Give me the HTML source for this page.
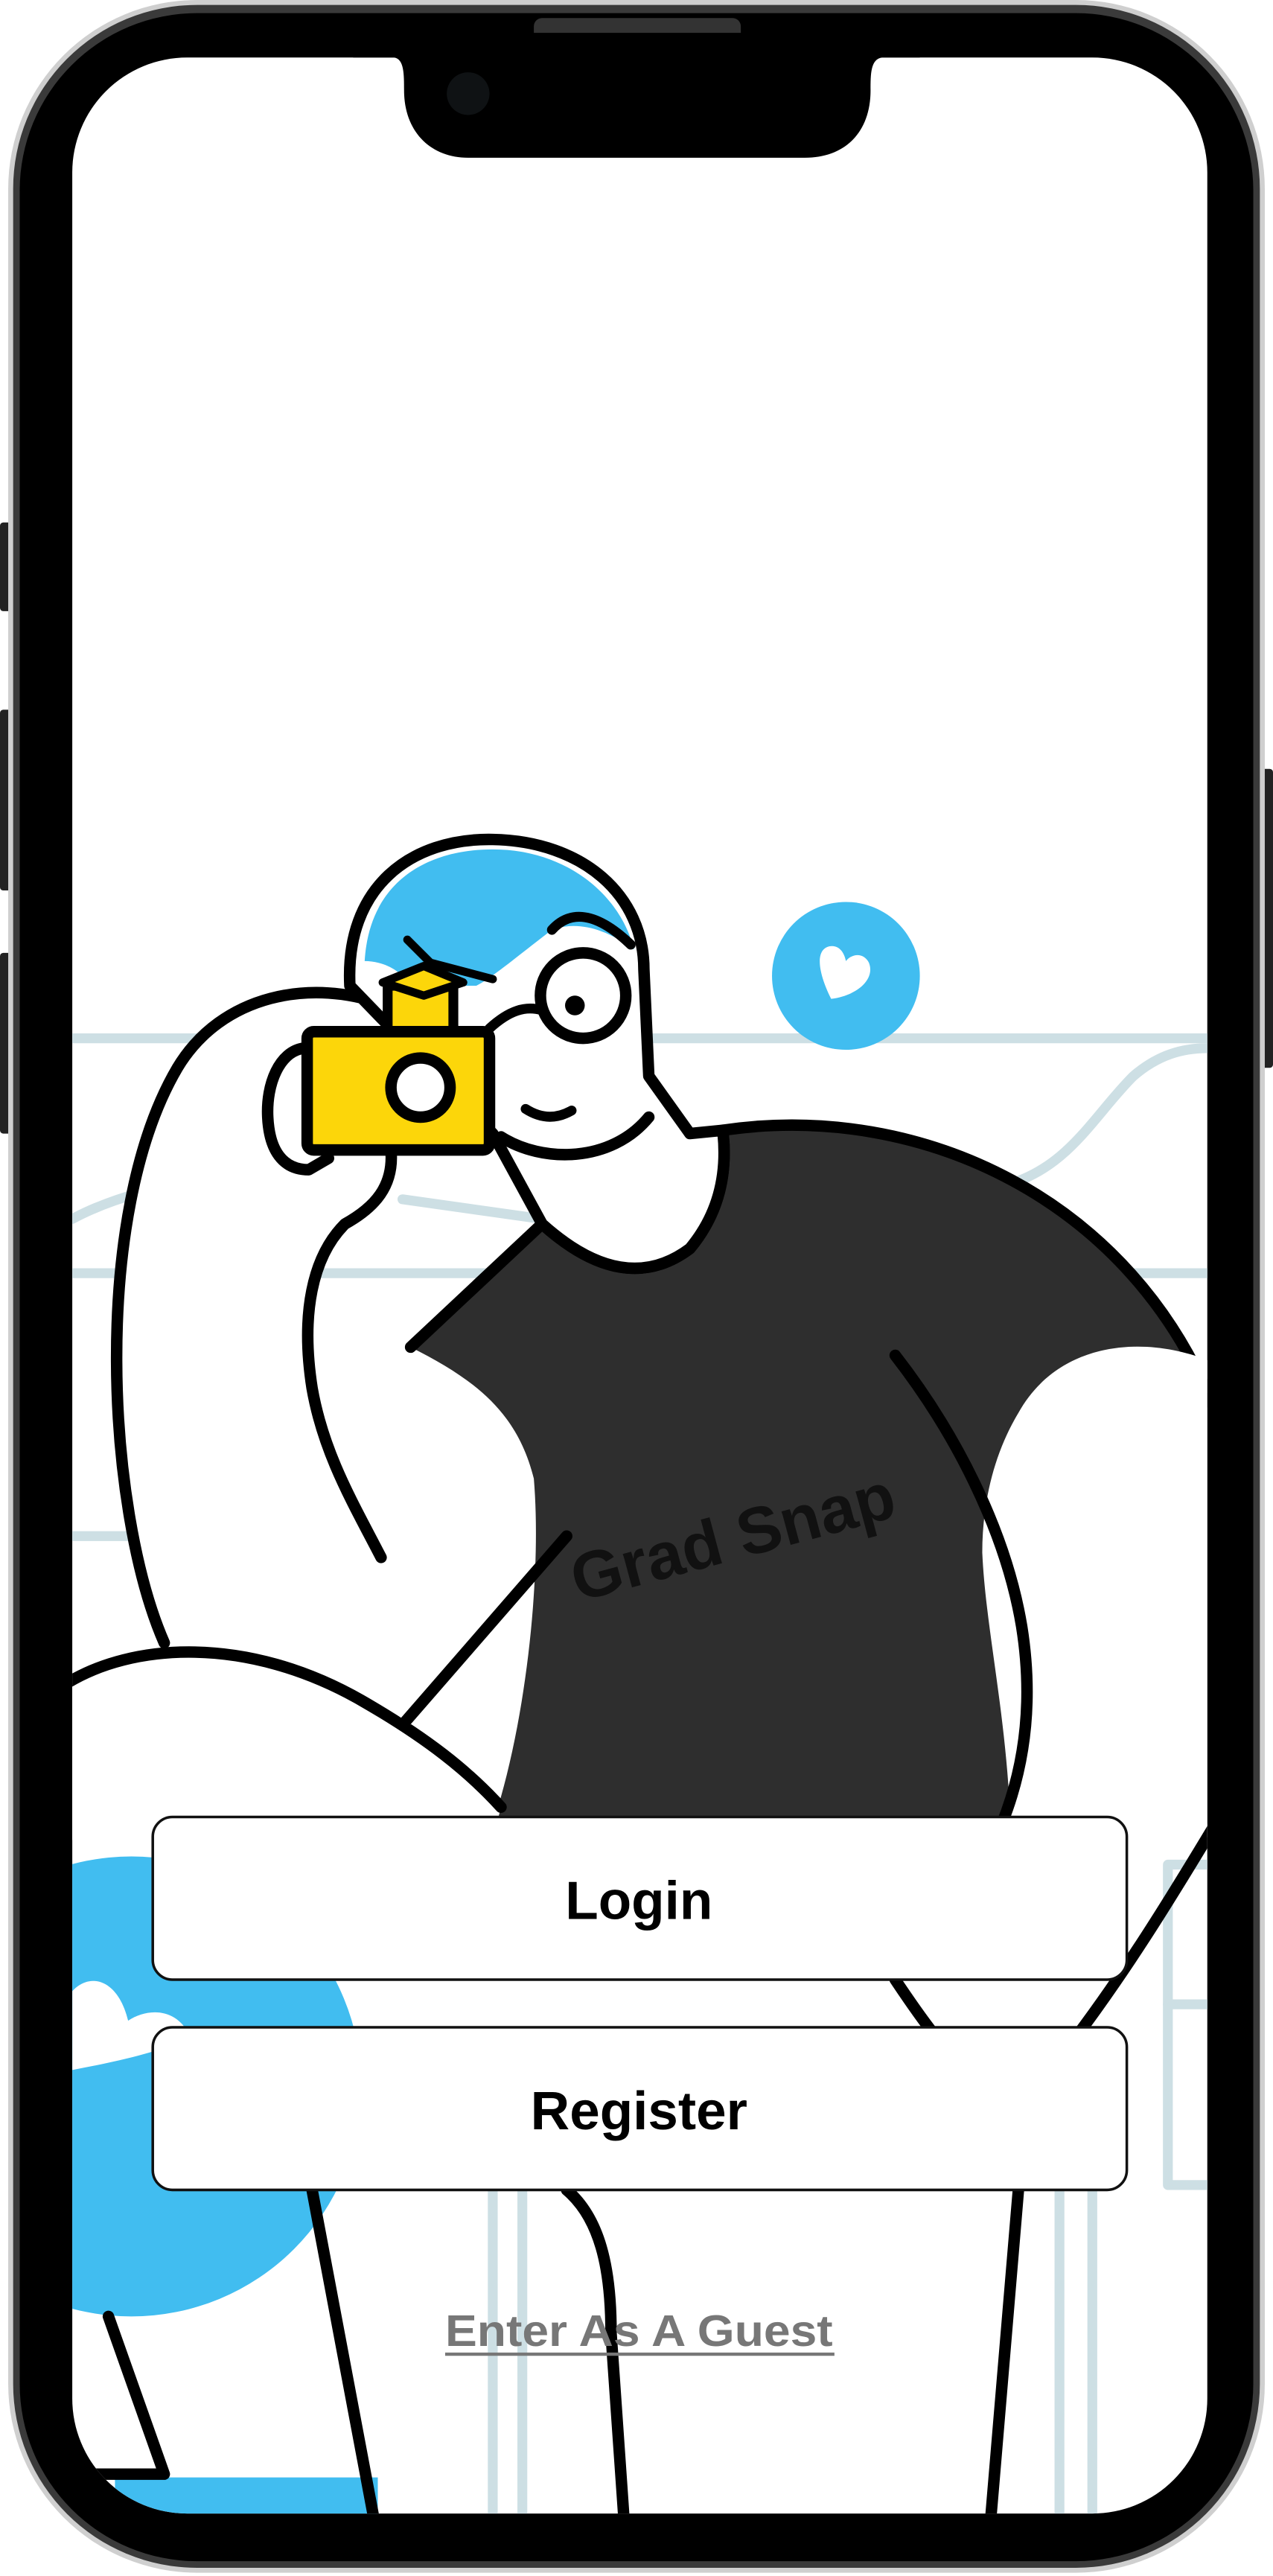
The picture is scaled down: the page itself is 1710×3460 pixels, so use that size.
<!DOCTYPE html>
<html><head><meta charset="utf-8"><style>
html,body{margin:0;padding:0;background:#fff;width:1710px;height:3460px;overflow:hidden}
svg{display:block}
</style></head><body>
<svg width="1710" height="3460" viewBox="0 0 775 1568" preserveAspectRatio="none" xmlns="http://www.w3.org/2000/svg">
<defs>
<clipPath id="scr"><rect x="44" y="35" width="691" height="1495" rx="70"/></clipPath>
</defs>
<rect x="0" y="318" width="7" height="54" rx="2" fill="#222"/>
<rect x="0" y="432" width="7" height="110" rx="2" fill="#222"/>
<rect x="0" y="580" width="7" height="110" rx="2" fill="#222"/>
<rect x="768" y="468" width="7" height="182" rx="2" fill="#222"/>
<rect x="5" y="0" width="765" height="1566" rx="115" fill="#cfcfcf"/>
<rect x="8" y="3" width="759" height="1560" rx="112" fill="#3a3a3a"/>
<rect x="12" y="8" width="751" height="1551" rx="108" fill="#000"/>
<rect x="325" y="11" width="126" height="15" rx="5" fill="#333"/>
<rect x="44" y="35" width="691" height="1495" rx="70" fill="#fff"/>
<g clip-path="url(#scr)" stroke-linecap="round" stroke-linejoin="round">
  <g stroke="#cddfe4" stroke-width="6" fill="none">
    <line x1="44" y1="632" x2="735" y2="632"/>
    <line x1="44" y1="775" x2="735" y2="775"/>
    <line x1="44" y1="935" x2="80" y2="935"/>
    <path d="M610,722 C650,712 665,680 690,655 C705,642 720,638 735,638"/>
    <path d="M44,742 C70,728 100,722 120,718"/>
    <line x1="245" y1="730" x2="330" y2="742"/>
    <line x1="300" y1="1333" x2="300" y2="1530"/>
    <line x1="318" y1="1333" x2="318" y2="1530"/>
    <line x1="645" y1="1333" x2="645" y2="1530"/>
    <line x1="665" y1="1300" x2="665" y2="1530"/>
  </g>
  <circle cx="80" cy="1270" r="140" fill="#41bdf0"/>
  <path d="M44,1212 C55,1200 72,1205 78,1230 C90,1222 108,1222 116,1240 C95,1250 70,1255 44,1260 Z" fill="#fff"/>
  <rect x="70" y="1508" width="160" height="30" fill="#41bdf0"/>
  <circle cx="515" cy="594" r="45" fill="#41bdf0"/>
  <path d="M506,608 C498,592 496,578 505,576 C511,575 514,580 515,585 C519,580 526,580 529,586 C533,596 522,606 506,608 Z" fill="#fff"/>
  <g stroke="#000" stroke-width="7" fill="none">
    <line x1="190" y1="1333" x2="228" y2="1535"/>
    <path d="M345,1333 C365,1350 372,1380 372,1420 L380,1535"/>
    <line x1="620" y1="1333" x2="603" y2="1535"/>
    <path d="M66,1410 L100,1506 L40,1506"/>
  </g>
  <path d="M250,820 L330,745 Q380,790 420,760 Q445,730 440,688 C560,670 690,730 740,860 L740,1110 L300,1110 C320,1050 330,960 325,900 C315,860 290,840 250,820 Z" fill="#2e2e2e"/>
  <path d="M330,745 Q380,790 420,760 Q445,730 440,688 C560,670 690,730 740,860" stroke="#000" stroke-width="7" fill="none"/>
  <path d="M250,820 L330,745" stroke="#000" stroke-width="7" fill="none"/>
  <path d="M740,830 C700,812 645,815 620,860 C605,885 598,915 598,945 C600,990 612,1040 615,1105 L610,1110 C590,1150 575,1180 545,1205 C560,1225 565,1235 570,1240 L655,1240 C685,1200 710,1160 740,1110 Z" fill="#fff"/>
  <g stroke="#cddfe4" stroke-width="6" fill="none">
    <path d="M740,1135 L711,1135 L711,1330 L740,1330"/>
    <line x1="711" y1="1220" x2="740" y2="1220"/>
  </g>
  <path d="M545,825 C580,870 612,930 622,990 C630,1040 622,1080 610,1110" stroke="#000" stroke-width="7" fill="none"/>
  <path d="M740,1110 C710,1160 685,1200 655,1240" stroke="#000" stroke-width="7" fill="none"/>
  <path d="M545,1205 C555,1220 562,1230 570,1240" stroke="#000" stroke-width="7" fill="none"/>
  <path d="M40,1025 C80,1000 150,995 220,1035 C260,1058 285,1078 305,1100 L300,1120 L40,1120 Z" fill="#fff"/>
  <path d="M40,1025 C80,1000 150,995 220,1035 C260,1058 285,1078 305,1100" stroke="#000" stroke-width="7" fill="none"/>
  <path d="M100,1000 C65,920 55,740 108,650 C135,605 190,595 235,612 L240,700 C238,720 225,735 210,745 C190,765 183,800 190,845 C197,885 215,920 232,948 L250,1050 C200,1010 140,1000 100,1000 Z" fill="#fff"/>
  <path d="M100,1000 C65,920 55,740 108,650 C135,605 190,595 235,612" stroke="#000" stroke-width="7" fill="none"/>
  <path d="M238,700 C240,722 228,735 210,745 C190,765 183,800 190,845 C197,885 215,915 232,948" stroke="#000" stroke-width="7" fill="none"/>
  <path d="M245,1050 C280,1010 315,970 345,935" stroke="#000" stroke-width="7" fill="none"/>
  <path d="M300,690 L330,745 Q380,790 420,760 Q445,730 440,688 L420,690 L395,655 L392,590 C392,545 355,512 300,511 C250,510 210,540 213,600 Z" fill="#fff" stroke="#000" stroke-width="7"/>
  <path d="M222,585 C225,535 262,517 300,517 C345,517 378,545 386,578 C370,566 352,560 336,566 C320,578 300,595 290,600 L248,600 C245,590 232,585 222,585 Z" fill="#41bdf0"/>
  <path d="M336,566 C345,556 360,552 384,575" stroke="#000" stroke-width="6" fill="none"/>
  <path d="M248,572 L262,586 L300,596" stroke="#000" stroke-width="5" fill="none"/>
  <path d="M305,692 C330,708 372,708 395,680" stroke="#000" stroke-width="7" fill="none"/>
  <circle cx="355" cy="606" r="26" fill="#fff" stroke="#000" stroke-width="7"/>
  <circle cx="350" cy="612" r="6" fill="#000"/>
  <path d="M320,675 Q334,684 348,676" stroke="#000" stroke-width="6" fill="none"/>
  <path d="M330,615 C320,612 310,615 298,626" stroke="#000" stroke-width="6" fill="none"/>
  <path d="M185,638 C170,640 162,660 163,680 C164,700 172,712 188,712 L200,705" fill="#fff" stroke="#000" stroke-width="7"/>
  <rect x="236" y="600" width="40" height="30" fill="#fcd60a" stroke="#000" stroke-width="6"/>
  <path d="M233,598 L258,588 L282,598 L258,606 Z" fill="#fcd60a" stroke="#000" stroke-width="5"/>
  <rect x="187" y="628" width="111" height="72" rx="4" fill="#fcd60a" stroke="#000" stroke-width="7"/>
  <circle cx="256" cy="662" r="18" fill="#fff" stroke="#000" stroke-width="7"/>
  <text x="352" y="975" transform="rotate(-15 352 975)" font-family="Liberation Sans, sans-serif" font-weight="bold" font-size="40" fill="#111">Grad Snap</text>
</g>
<path d="M215,35 L240,35 C246,36 246,45 246,55 C246,80 262,96 285,96 L490,96 C515,96 530,80 530,55 C530,45 530,36 537,35 L560,35 L560,20 L215,20 Z" fill="#000"/>
<circle cx="285" cy="57" r="13" fill="#0f1214"/>
<rect x="93" y="1106" width="593" height="99" rx="12" fill="#fff" stroke="#111" stroke-width="1.6"/>
<text x="389" y="1168" text-anchor="middle" font-family="Liberation Sans, sans-serif" font-weight="bold" font-size="33" fill="#000">Login</text>
<rect x="93" y="1234" width="593" height="99" rx="12" fill="#fff" stroke="#111" stroke-width="1.6"/>
<text x="389" y="1296" text-anchor="middle" font-family="Liberation Sans, sans-serif" font-weight="bold" font-size="33" fill="#000">Register</text>
<text x="389" y="1428" text-anchor="middle" font-family="Liberation Sans, sans-serif" font-weight="bold" font-size="27" fill="#777" textLength="236" lengthAdjust="spacingAndGlyphs">Enter As A Guest</text>
<line x1="271" y1="1433" x2="508" y2="1433" stroke="#777" stroke-width="2"/>
</svg>
</body></html>
